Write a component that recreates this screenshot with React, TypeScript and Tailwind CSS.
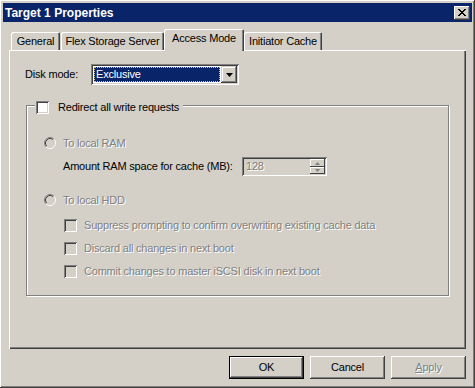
import React from 'react';

const raised = 'shadow-[inset_-1px_-1px_#404040,inset_1px_1px_#ffffff,inset_-2px_-2px_#808080,inset_2px_2px_#d4d0c8]';
const sunken = 'shadow-[inset_1px_1px_#808080,inset_-1px_-1px_#ffffff,inset_2px_2px_#404040,inset_-2px_-2px_#d4d0c8]';
const dis = 'text-[#808080] [text-shadow:1px_1px_0_#ffffff]';

const Radio = () => (
  <svg width="12" height="12" viewBox="0 0 12 12" className="shrink-0">
    <circle cx="6" cy="6" r="4.5" fill="#d4d0c8" />
    <path d="M2.11 9.89 A5.5 5.5 0 0 1 9.89 2.11" stroke="#808080" fill="none" />
    <path d="M9.89 2.11 A5.5 5.5 0 0 1 2.11 9.89" stroke="#ffffff" fill="none" />
    <path d="M2.82 9.18 A4.5 4.5 0 0 1 9.18 2.82" stroke="#404040" fill="none" />
    <path d="M9.18 2.82 A4.5 4.5 0 0 1 2.82 9.18" stroke="#d4d0c8" fill="none" />
  </svg>
);

const Check = ({ on = true }: { on?: boolean }) => (
  <div className={`w-[13px] h-[13px] shrink-0 ${sunken} ${on ? 'bg-white' : 'bg-[#d4d0c8]'}`} />
);

const Tab = ({ label, active = false, w }: { label: string; active?: boolean; w: string }) => (
  <div
    className={`${w} flex items-center justify-center rounded-t-[2px] bg-[#d4d0c8] shadow-[inset_1px_1px_#ffffff,inset_-1px_0_#404040,inset_-2px_0_#808080] ${
      active ? 'h-[22px] -mb-px relative z-10 pb-[3px]' : 'h-[18px] pt-px'
    }`}
  >
    {label}
  </div>
);

const Btn = ({ children, def = false }: { children: React.ReactNode; def?: boolean }) => (
  <div className={`w-[75px] h-[23px] ${def ? 'border border-black' : ''}`}>
    <div
      className={`w-full h-full flex items-center justify-center bg-[#d4d0c8] shadow-[inset_-1px_-1px_#404040,inset_1px_1px_#ffffff,inset_-2px_-2px_#808080]`}
    >
      {children}
    </div>
  </div>
);

export default function App() {
  return (
    <div
      className={`w-[475px] h-[388px] bg-[#d4d0c8] p-[3px] flex flex-col text-[11px] tracking-[-0.2px] text-black font-['Liberation_Sans',Arial,sans-serif] ${raised}`}
    >
      {/* title bar */}
      <div className="h-[19px] bg-[#0a246a] flex items-center justify-between pl-[2px] pr-[2px]">
        <span className="text-white font-bold text-[12px] tracking-normal">Target 1 Properties</span>
        <div className={`w-[16px] h-[14px] bg-[#d4d0c8] flex items-center justify-center ${raised}`}>
          <svg width="8" height="7" viewBox="0 0 8 7">
            <path d="M0 0h2v1h1v1h2V1h1V0h2v1H7v1H6v1H5v1h1v1h1v1h1v1H6V6H5V5H3v1H2v1H0V6h1V5h1V4h1V3H2V2H1V1H0z" fill="#000" />
          </svg>
        </div>
      </div>

      <div className="pl-[6px] mt-[7px]">
        {/* tabs */}
        <div className="flex items-end h-[21px] pl-[2px]">
          <Tab label="General" w="w-[49px]" />
          <div className="w-px" />
          <Tab label="Flex Storage Server" w="w-[103px]" />
          <Tab label="Access Mode" w="w-[80px]" active />
          <Tab label="Initiator Cache" w="w-[78px]" />
        </div>

        {/* panel */}
        <div className="w-[457px] h-[299px] shadow-[inset_1px_1px_#ffffff,inset_-1px_-1px_#404040,inset_-2px_-2px_#808080] pt-[14px]">
          <div className="flex items-center pl-[16px]">
            <span className="w-[66px]">Disk mode:</span>
            <div className={`w-[148px] h-[21px] bg-white p-[3px] flex ${sunken}`}>
              <div className="flex-1 bg-[#0a246a] text-white border border-dotted border-[#d4c080] pl-[1px] leading-[13px]">
                Exclusive
              </div>
              <div className="w-[16px] h-[17px] -mt-px -mr-px ml-px bg-[#d4d0c8] flex items-center justify-center shadow-[inset_-1px_-1px_#404040,inset_1px_1px_#d4d0c8,inset_-2px_-2px_#808080,inset_2px_2px_#ffffff]">
                <svg width="7" height="4" viewBox="0 0 7 4">
                  <path d="M0 0h7L3.5 4z" fill="#000" />
                </svg>
              </div>
            </div>
          </div>

          {/* group box */}
          <div className="relative ml-[17px] mt-[20px] w-[423px] h-[191px] border border-[#808080] shadow-[1px_1px_0_#ffffff,inset_1px_1px_0_#ffffff]">
            <div className="absolute left-[8px] -top-[7px] bg-[#d4d0c8] flex items-center gap-[9px] pl-px pr-[4px]">
              <Check />
              <span>Redirect all write requests</span>
            </div>

            <div className="flex flex-col pt-[29px]">
              <div className={`h-[16px] flex items-center pl-[17px] gap-[7px] ${dis}`}>
                <Radio />
                <span>To local RAM</span>
              </div>
              <div className="h-[19px] mt-[6px] flex items-center pl-[36px]">
                <span className="w-[179px]">Amount RAM space for cache (MB):</span>
                <div className={`w-[85px] h-[19px] bg-[#d4d0c8] flex ${sunken} p-[2px]`}>
                  <span className={`flex-1 pl-[2px] leading-[15px] ${dis}`}>128</span>
                  <div className="w-[15px] flex flex-col">
                    <div className="h-[8px] bg-[#d4d0c8] flex items-center justify-center shadow-[inset_-1px_-1px_#404040,inset_1px_1px_#ffffff]">
                      <svg width="5" height="3" viewBox="0 0 5 3"><path d="M2.5 0L5 3H0z" fill="#808080" /></svg>
                    </div>
                    <div className="h-[7px] bg-[#d4d0c8] flex items-center justify-center shadow-[inset_-1px_-1px_#404040,inset_1px_1px_#ffffff]">
                      <svg width="5" height="3" viewBox="0 0 5 3"><path d="M0 0h5L2.5 3z" fill="#808080" /></svg>
                    </div>
                  </div>
                </div>
              </div>
              <div className={`h-[16px] mt-[16px] flex items-center pl-[17px] gap-[7px] ${dis}`}>
                <Radio />
                <span>To local HDD</span>
              </div>
              {[
                'Suppress prompting to confirm overwriting existing cache data',
                'Discard all changes in next boot',
                'Commit changes to master iSCSI disk in next boot',
              ].map((t, i) => (
                <div
                  key={t}
                  className={`h-[16px] flex items-center pl-[37px] gap-[7px] ${i === 0 ? 'mt-[9px]' : 'mt-[7px]'} ${dis}`}
                >
                  <Check on={false} />
                  <span>{t}</span>
                </div>
              ))}
            </div>
          </div>
        </div>

        {/* buttons */}
        <div className="w-[457px] flex justify-end gap-[6px] mt-[7px]">
          <Btn def>OK</Btn>
          <Btn>Cancel</Btn>
          <Btn>
            <span className={dis}>
              <span className="underline">A</span>pply
            </span>
          </Btn>
        </div>
      </div>
    </div>
  );
}
